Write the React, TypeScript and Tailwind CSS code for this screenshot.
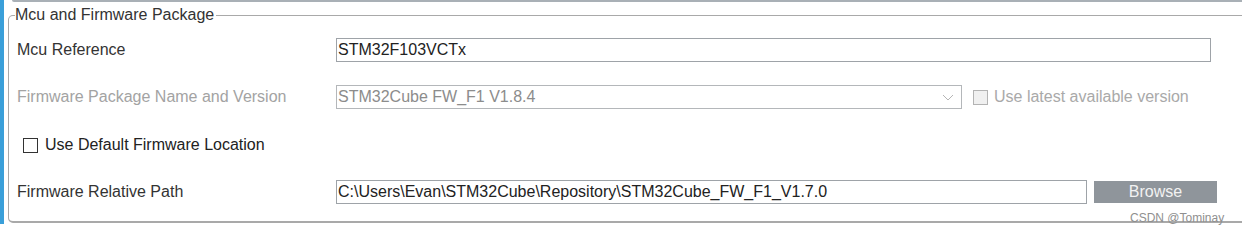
export default function App() {
  const font = { fontFamily: '"Liberation Sans", Arial, sans-serif' }
  return (
    <div className="relative flex h-[232px] w-[1242px] overflow-hidden bg-white" style={font}>
      {/* side accent */}
      <div className="h-[224px] w-[4px] shrink-0 bg-[#3a9fd9]" />

      <div className="flex flex-col pl-[4px]">
        {/* bottom edge of the panel above */}
        <div className="ml-[4px] h-[2px] w-[1250px] rounded-bl-[4px] border-b-2 border-l border-[#a9b0b6]" />

        <fieldset className="mt-[4px] w-[1260px] rounded-l-[5px] border border-b-2 border-[#a9a9a9] pb-[17px]">
          <legend className="ml-[6px] pr-[2px] text-[16px] leading-[18px] text-[#333]">
            Mcu and Firmware Package
          </legend>

          <div className="mt-[14px] flex h-[24px] items-center pl-[8px]">
            <span className="w-[319px] text-[16px] text-[#333]">Mcu Reference</span>
            <div className="flex h-[24px] w-[875px] items-center border border-[#9ea3a8] px-[1px] text-[16px] text-[#222]">
              STM32F103VCTx
            </div>
          </div>

          <div className="mt-[23px] flex h-[24px] items-center pl-[8px]">
            <span className="w-[319px] text-[16px] text-[#a3a3a3]">Firmware Package Name and Version</span>
            <div className="flex h-[24px] w-[626px] items-center justify-between border border-[#b4b7ba] pl-[1px] pr-[7px] text-[16px] text-[#8c8c8c]">
              <span>STM32Cube FW_F1 V1.8.4</span>
              <svg width="12" height="7" viewBox="0 0 12 7" fill="none">
                <path d="M1 1l5 5 5-5" stroke="#b5b5b5" strokeWidth="1" />
              </svg>
            </div>
            <div className="ml-[11px] h-[15px] w-[15px] border border-[#b3b3b3] bg-[#f0f0f0]" />
            <span className="ml-[6px] text-[16px] text-[#a9a9a9]">Use latest available version</span>
          </div>

          <div className="mt-[24px] flex h-[24px] items-center pl-[8px]">
            <div className="ml-[6px] h-[15px] w-[15px] border border-[#333] bg-white" />
            <span className="ml-[7px] text-[16px] text-[#222]">Use Default Firmware Location</span>
          </div>

          <div className="mt-[23px] flex h-[24px] items-center pl-[8px]">
            <span className="w-[319px] text-[16px] text-[#333]">Firmware Relative Path</span>
            <div className="flex h-[24px] w-[751px] items-center border border-[#9ea3a8] px-[1px] text-[16px] text-[#222]">
              C:\Users\Evan\STM32Cube\Repository\STM32Cube_FW_F1_V1.7.0
            </div>
            <button className="ml-[7px] h-[22px] w-[123px] bg-[#8f959b] text-[16px] leading-[22px] text-[#f2f2f2]">
              Browse
            </button>
          </div>
        </fieldset>
      </div>

      <span className="absolute left-[1130px] top-[210px] text-[12px] leading-[16px] text-[#8f8f8f]">
        CSDN @Tominay
      </span>
    </div>
  )
}
